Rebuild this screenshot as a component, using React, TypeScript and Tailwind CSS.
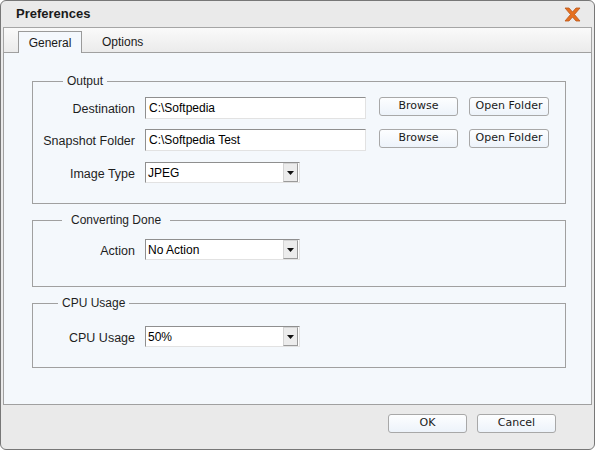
import { type ReactNode } from "react";

const sans = "font-['Liberation_Sans',Arial,sans-serif]";
const btnFont = "font-['DejaVu_Sans',Verdana,sans-serif]";

function Button({ children, className = "" }: { children: ReactNode; className?: string }) {
  return (
    <div
      className={`${btnFont} h-[19px] flex items-center justify-center rounded-[3px] border border-[#a8a8a8] bg-linear-to-b from-[#fdfeff] to-[#edf3fa] text-[11px] text-[#1a1a1a] ${className}`}
    >
      {children}
    </div>
  );
}

function TextBox({ value, className = "" }: { value: string; className?: string }) {
  return (
    <div
      className={`h-[22px] flex items-center pl-[3px] bg-white border border-[#8f8f8f] border-r-[#e2e2e2] border-b-[#e2e2e2] text-[12px] text-black ${className}`}
    >
      {value}
    </div>
  );
}

function Select({ value }: { value: string }) {
  return (
    <div className="w-[155px] h-[21px] flex items-center bg-white border border-[#8f8f8f] border-r-[#e2e2e2] border-b-[#e2e2e2]">
      <span className="flex-1 pl-[2px] text-[12px] text-black">{value}</span>
      <div className="w-[15px] h-[19px] mr-[1px] flex items-center justify-center bg-[#ececec] border border-[#d4d4d4] border-r-[#9a9a9a] border-b-[#9a9a9a]">
        <svg width="7" height="4" viewBox="0 0 7 4">
          <path d="M0 0h7L3.5 4z" fill="#111" />
        </svg>
      </div>
    </div>
  );
}

function Row({ label, children, className = "" }: { label: string; children: ReactNode; className?: string }) {
  return (
    <div className={`flex items-start ${className}`}>
      <div className="w-[102px] h-[22px] pt-[2px] flex items-center justify-end text-[12.5px] leading-[16px] text-[#1e1e1e]">
        {label}
      </div>
      <div className="ml-[10px] flex items-start">{children}</div>
    </div>
  );
}

function Group({
  title,
  legendClass,
  className = "",
  children,
}: {
  title: string;
  legendClass: string;
  className?: string;
  children: ReactNode;
}) {
  return (
    <fieldset className={`border border-[#a0a0a0] ${className}`}>
      <legend className={`leading-[14px] text-[12px] text-[#1e1e1e] ${legendClass}`}>{title}</legend>
      {children}
    </fieldset>
  );
}

export default function App() {
  return (
    <div className={`${sans} w-[595px] h-[450px] bg-white`}>
      <div className="h-full flex flex-col rounded-[6px] border border-[#777] bg-[#eaeaea] px-[2px]">
        {/* Title bar */}
        <div className="h-[26px] shrink-0 flex items-center justify-between pl-[13px] pr-[11px]">
          <span className="text-[13px] font-bold text-[#1a1a1a]">Preferences</span>
          <svg width="17" height="15" viewBox="0 0 17 15">
            <path
              d="M1 1h4l3.5 4L12 1h4l-5.5 6.5L16 14h-4l-3.5-4L5 14H1l5.5-6.5z"
              fill="#e6701f"
              stroke="#b9561a"
              strokeWidth="0.8"
              strokeLinejoin="round"
            />
          </svg>
        </div>

        {/* Tabs */}
        <div className="h-[25px] shrink-0 flex items-end pl-[14px] border border-b-0 border-[#a5a5a5] bg-linear-to-b from-[#fafafa] to-[#ebebeb]">
          <div className="h-[22px] w-[64px] flex items-center justify-center border border-b-0 border-[#9a9a9a] bg-[#f4f8fd] text-[12px] text-[#1a1a1a] translate-y-[1px]">
            General
          </div>
          <div className="h-[21px] flex items-center pl-[20px] text-[12px] text-[#1a1a1a]">Options</div>
        </div>

        {/* Panel */}
        <div className="h-[353px] shrink-0 border border-[#a0a0a0] bg-[#f4f8fc] pl-[28px] pr-[25px]">
          <Group title="Output" legendClass="ml-[30px] px-[4px]" className="mt-[21px] pt-[9px] pb-[19px]">
            <Row label="Destination">
              <TextBox value="C:\Softpedia" className="w-[221px]" />
              <Button className="ml-[13px] w-[79px]">Browse</Button>
              <Button className="ml-[11px] w-[80px]">Open Folder</Button>
            </Row>
            <Row label="Snapshot Folder" className="mt-[10px]">
              <TextBox value="C:\Softpedia Test" className="w-[221px]" />
              <Button className="ml-[13px] w-[79px]">Browse</Button>
              <Button className="ml-[11px] w-[80px]">Open Folder</Button>
            </Row>
            <Row label="Image Type" className="mt-[11px]">
              <Select value="JPEG" />
            </Row>
          </Group>

          <Group title="Converting Done" legendClass="ml-[29px] px-[9px]" className="mt-[9px] pt-[12px] pb-[25px]">
            <Row label="Action">
              <Select value="No Action" />
            </Row>
          </Group>

          <Group title="CPU Usage" legendClass="ml-[25px] px-[4px]" className="mt-[9px] pt-[16px] pb-[19px]">
            <Row label="CPU Usage">
              <Select value="50%" />
            </Row>
          </Group>
        </div>

        {/* Footer */}
        <div className="flex-1 flex items-start justify-end pt-[9px] pr-[36px] gap-[10px]">
          <Button className="w-[79px]">OK</Button>
          <Button className="w-[79px]">Cancel</Button>
        </div>
      </div>
    </div>
  );
}
